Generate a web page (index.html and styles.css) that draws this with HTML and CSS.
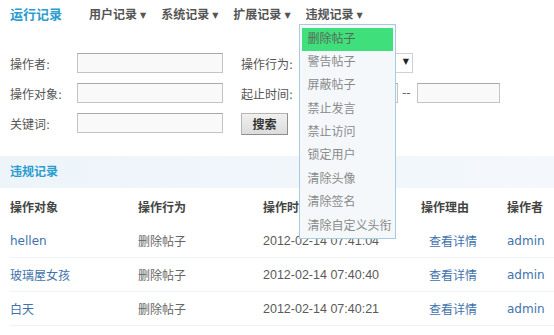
FILE: index.html
```html
<!DOCTYPE html>
<html lang="zh-CN">
<head>
  <meta charset="UTF-8">
  <title>违规记录</title>
  <link rel="stylesheet" href="styles.css">
</head>
<body>
  <div class="topnav">
    <span class="nav-title">运行记录</span>
    <span class="nav-item">用户记录<i class="arrow">▼</i></span>
    <span class="nav-item">系统记录<i class="arrow">▼</i></span>
    <span class="nav-item">扩展记录<i class="arrow">▼</i></span>
    <span class="nav-item nav-open">违规记录<i class="arrow">▼</i>
      <ul class="dropdown">
        <li class="active">删除帖子</li>
        <li>警告帖子</li>
        <li>屏蔽帖子</li>
        <li>禁止发言</li>
        <li>禁止访问</li>
        <li>锁定用户</li>
        <li>清除头像</li>
        <li>清除签名</li>
        <li>清除自定义头衔</li>
      </ul>
    </span>
  </div>

  <!-- search form -->
  <form class="search">
    <label>操作者:</label>
    <input type="text" class="field">
    <label class="lbl2">操作行为:</label>
    <div class="pair">
      <div class="select"><i class="arrow">▼</i></div>
    </div>

    <label>操作对象:</label>
    <input type="text" class="field">
    <label class="lbl2">起止时间:</label>
    <div class="pair">
      <input type="text" class="field date1">
      <span class="dash">--</span>
      <input type="text" class="field date2">
    </div>

    <label>关键词:</label>
    <input type="text" class="field">
    <div class="lbl2"><button type="button" class="btn">搜索</button></div>
    <div></div>
  </form>

  <div class="band">违规记录</div>

  <table class="records">
    <thead>
      <tr>
        <th class="c1">操作对象</th>
        <th class="c2">操作行为</th>
        <th class="c3">操作时间</th>
        <th class="c4">操作理由</th>
        <th class="c5">操作者</th>
      </tr>
    </thead>
    <tbody>
      <tr>
        <td><a href="#">hellen</a></td>
        <td>删除帖子</td>
        <td class="time">2012-02-14 07:41:04</td>
        <td class="why"><a href="#">查看详情</a></td>
        <td><a href="#">admin</a></td>
      </tr>
      <tr>
        <td><a href="#">玻璃屋女孩</a></td>
        <td>删除帖子</td>
        <td class="time">2012-02-14 07:40:40</td>
        <td class="why"><a href="#">查看详情</a></td>
        <td><a href="#">admin</a></td>
      </tr>
      <tr>
        <td><a href="#">白天</a></td>
        <td>删除帖子</td>
        <td class="time">2012-02-14 07:40:21</td>
        <td class="why"><a href="#">查看详情</a></td>
        <td><a href="#">admin</a></td>
      </tr>
    </tbody>
  </table>
</body>
</html>
```

FILE: styles.css
```css
body {
  margin: 0;
  padding: 0 0 0 10px;
  font-family: "DejaVu Sans", "Noto Sans CJK SC", sans-serif;
  font-size: 12px;
  color: #555;
  background: #fff;
}
.topnav {
  display: flex;
  align-items: center;
  height: 26px;
}
.nav-title {
  font-size: 13px;
  font-weight: bold;
  color: #2a9ccf;
  margin-right: 27px;
}
.nav-item {
  position: relative;
  font-weight: bold;
  color: #555;
  margin-right: 15px;
}
.arrow {
  font-style: normal;
  font-size: 8px;
  margin-left: 3px;
  vertical-align: 1px;
}
.dropdown {
  position: absolute;
  left: -7px;
  top: 19px;
  width: 95px;
  margin: 0;
  padding: 3px 0 0;
  list-style: none;
  background: #f4f8fb;
  border: 1px solid #a9cadf;
  z-index: 10;
}
.dropdown li {
  height: 23.4px;
  line-height: 23px;
  padding-left: 6px;
  margin: 0 2px;
  font-weight: normal;
  color: #8a8a8a;
  white-space: nowrap;
}
.dropdown li.active {
  background: #3fe07b;
  color: #5a6a5a;
}
.search {
  display: grid;
  grid-template-columns: 67px 146px 82px 1fr;
  grid-auto-rows: 30px;
  align-items: center;
  margin-top: 22px;
}
.search .lbl2 {
  margin-left: 18px;
}
.search .pair {
  display: flex;
  align-items: center;
}
.field {
  box-sizing: border-box;
  height: 20px;
  border: 1px solid #c4c4c4;
  border-top-color: #a8a8a8;
  background: #f9f9f9;
  width: 146px;
}
.select {
  box-sizing: border-box;
  width: 108px;
  height: 20px;
  border: 1px solid #d0d0d0;
  background: #fff;
  text-align: right;
  padding-right: 3px;
  color: #222;
}
.date1 {
  width: 93px;
}
.dash {
  margin: 0 6px 0 4px;
  color: #666;
}
.date2 {
  width: 83px;
}
.btn {
  width: 47px;
  height: 22px;
  margin-top: 1px;
  border: 1px solid #b5b5b5;
  border-right-color: #8e8e8e;
  border-bottom-color: #8e8e8e;
  background: linear-gradient(#f0f0f0, #dcdcdc);
  font-family: "Noto Sans CJK SC", sans-serif;
  font-size: 12px;
  font-weight: bold;
  color: #333;
  padding: 0;
}
.band {
  margin: 18px 0 0 -10px;
  height: 32px;
  line-height: 32px;
  padding-left: 10px;
  background: linear-gradient(90deg, #edf4fa, #f4f8fc);
  font-weight: bold;
  color: #2a9ccf;
}
.records {
  border-collapse: collapse;
  width: 544px;
  table-layout: fixed;
}
.records th {
  height: 36px;
  text-align: left;
  font-weight: bold;
  color: #444;
  padding: 0;
}
.records td {
  height: 33px;
  padding: 0;
  border-bottom: 1px solid #f0f3f6;
  color: #666;
}
.records .c1 { width: 128px; }
.records .c2 { width: 125px; }
.records .c3 { width: 158px; }
.records .c4 { width: 86px; }
.records .time {
  font-family: "Liberation Sans", sans-serif;
  font-size: 12.5px;
  color: #5a5a5a;
}
.records .why {
  padding-left: 8px;
}
a {
  color: #3f72ad;
  text-decoration: none;
}
```
